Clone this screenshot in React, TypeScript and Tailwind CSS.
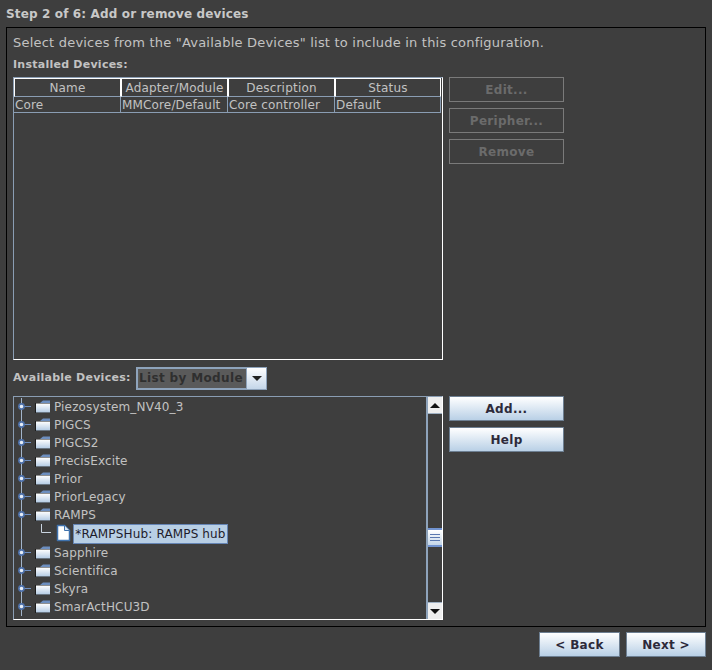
import type { ReactNode } from "react";

const FONT = "font-['DejaVu_Sans',sans-serif]";

const columns = [
  { name: "Name", width: "w-[107px]", value: "Core" },
  { name: "Adapter/Module", width: "w-[107px]", value: "MMCore/Default" },
  { name: "Description", width: "w-[107px]", value: "Core controller" },
  { name: "Status", width: "w-[106px]", value: "Default" },
];

const beforeHub = [
  "Piezosystem_NV40_3",
  "PIGCS",
  "PIGCS2",
  "PrecisExcite",
  "Prior",
  "PriorLegacy",
  "RAMPS",
];
const afterHub = ["Sapphire", "Scientifica", "Skyra", "SmarActHCU3D"];

function DisabledButton({ children }: { children: ReactNode }) {
  return (
    <div className="w-[115px] h-[25px] border border-[#7a7a7a] flex items-center justify-center font-bold text-[12px] tracking-[0.3px] text-[#6b6b6b]">
      {children}
    </div>
  );
}

function BlueButton({ children, w = "w-[115px]" }: { children: ReactNode; w?: string }) {
  return (
    <div
      className={`${w} h-[25px] border border-[#6d7f92] bg-gradient-to-b from-[#ffffff] to-[#b9d0e6] flex items-center justify-center font-bold text-[12px] tracking-[0.3px] text-[#2d2a3a]`}
    >
      {children}
    </div>
  );
}

function FolderRow({ name }: { name: string }) {
  return (
    <div className="h-[18px] flex items-center">
      <svg width="40" height="18" viewBox="0 0 40 18" className="shrink-0">
        <defs>
          <linearGradient id="folder" x1="0" y1="0" x2="0" y2="1">
            <stop offset="0" stopColor="#ffffff" />
            <stop offset="1" stopColor="#b4cbe4" />
          </linearGradient>
        </defs>
        <line x1="7.5" y1="0" x2="7.5" y2="18" stroke="#a3b5ca" />
        <line x1="10" y1="8.5" x2="17" y2="8.5" stroke="#6f8fc0" />
        <circle cx="7.5" cy="8.5" r="2.6" fill="#e8eef6" stroke="#4f73ad" strokeWidth="1.6" />
        <path d="M26 5 L29 2.5 H36 V5 Z" fill="#6c8ebf" />
        <rect x="21" y="5" width="15" height="10" fill="#1c1c1c" />
        <rect x="22" y="5.5" width="14" height="9" fill="url(#folder)" />
      </svg>
      <span className="text-[12px] tracking-[0.15px] text-[#c2c2c2]">{name}</span>
    </div>
  );
}

function HubRow() {
  return (
    <div className="h-[20px] flex items-center">
      <svg width="59" height="20" viewBox="0 0 59 20" className="shrink-0">
        <line x1="7.5" y1="0" x2="7.5" y2="20" stroke="#a3b5ca" />
        <path d="M27.5 0 V8.5 H37" fill="none" stroke="#c9d4e0" />
        <path d="M43.5 1.5 H50.5 L55.5 6.5 V16.5 H43.5 Z" fill="#ffffff" stroke="#3f72ad" strokeWidth="1.5" strokeLinejoin="round" />
        <path d="M50.5 1.5 V6.5 H55.5" fill="#dbe6f2" stroke="#3f72ad" />
      </svg>
      <span className="h-[20px] w-[155px] bg-[#b8cfe5] border border-[#6585b5] flex items-center justify-center text-[12px] tracking-[0.15px] text-[#1e1b2b]">
        *RAMPSHub: RAMPS hub
      </span>
    </div>
  );
}

export default function App() {
  return (
    <div className={`${FONT} w-[712px] h-[670px] bg-[#3e3e3e] overflow-hidden px-[6px] flex flex-col`}>
      <h1 className="h-[27px] flex items-center pt-[1px] font-bold text-[12px] tracking-[0.14px] text-[#c8c8c8]">
        Step 2 of 6: Add or remove devices
      </h1>

      <div className="w-[700px] h-[600px] border border-black px-[6px] flex flex-col">
        <p className="h-[23px] pt-[6px] text-[13px] leading-[17px] tracking-[0.21px] text-[#c2c2c2] whitespace-nowrap">
          Select devices from the "Available Devices" list to include in this configuration.
        </p>
        <p className="h-[26px] pt-[6px] font-bold text-[11px] leading-[16px] tracking-[0.25px] text-[#c2c2c2]">
          Installed Devices:
        </p>

        <div className="flex gap-[6px]">
          <div className="w-[430px] h-[283px] border border-[#8a9db3] border-r-white border-b-white">
            <div className="flex h-[19px]">
              {columns.map((c) => (
                <div
                  key={c.name}
                  className={`${c.width} border border-white border-b-[#8a9db3] flex items-center justify-center text-[12px] tracking-[0.2px] text-[#c2c2c2]`}
                >
                  {c.name}
                </div>
              ))}
            </div>
            <div className="flex w-[427px] h-[16px] border-b border-[#8a9db3]">
              {columns.map((c) => (
                <div
                  key={c.name}
                  className={`${c.width} border-r border-[#8a9db3] flex items-center pl-[1px] text-[12px] tracking-[0.15px] text-[#c2c2c2]`}
                >
                  {c.value}
                </div>
              ))}
            </div>
          </div>
          <div className="flex flex-col gap-[6px]">
            <DisabledButton>Edit...</DisabledButton>
            <DisabledButton>Peripher...</DisabledButton>
            <DisabledButton>Remove</DisabledButton>
          </div>
        </div>

        <div className="h-[36px] flex items-center">
          <span className="font-bold text-[11px] tracking-[0.25px] text-[#c2c2c2] w-[123px] whitespace-nowrap">
            Available Devices:
          </span>
          <div className="w-[131px] h-[23px] flex border border-[#8ea3bb]">
            <div className="w-[110px] border border-[#8ea3bb] bg-[#5a5a5a] flex items-center pl-[1px] font-bold text-[12px] tracking-[0.35px] text-[#2f2f2f]">
              List by Module
            </div>
            <div className="flex-1 bg-gradient-to-b from-white to-[#c4d6e9] flex items-center justify-center">
              <div className="w-0 h-0 border-x-[5px] border-x-transparent border-t-[5px] border-t-[#222222]" />
            </div>
          </div>
        </div>

        <div className="flex gap-[6px]">
          <div className="w-[430px] h-[224px] border border-[#8a9db3] border-r-white border-b-white flex">
            <div className="flex-1 pt-[1px] overflow-hidden">
              {beforeHub.map((n) => (
                <FolderRow key={n} name={n} />
              ))}
              <HubRow />
              {afterHub.map((n) => (
                <FolderRow key={n} name={n} />
              ))}
            </div>
            <div className="w-[16px] border-l-2 border-[#8ea3bb] flex flex-col">
              <div className="h-[17px] bg-[#eeeeee] border-b border-[#9fb0c2] flex items-center justify-center">
                <div className="w-0 h-0 border-x-[5px] border-x-transparent border-b-[5px] border-b-[#111111]" />
              </div>
              <div className="h-[19px] mt-[114px] border-y-2 border-[#7193d0] bg-gradient-to-b from-white to-[#c4d6e9] flex flex-col items-center justify-center gap-[2px]">
                <div className="w-[10px] h-px bg-[#5a78b0]" />
                <div className="w-[10px] h-px bg-[#5a78b0]" />
                <div className="w-[10px] h-px bg-[#5a78b0]" />
              </div>
              <div className="mt-auto h-[17px] bg-[#eeeeee] border-t border-[#9fb0c2] flex items-center justify-center">
                <div className="w-0 h-0 border-x-[5px] border-x-transparent border-t-[5px] border-t-[#111111]" />
              </div>
            </div>
          </div>
          <div className="flex flex-col gap-[6px]">
            <BlueButton>Add...</BlueButton>
            <BlueButton>Help</BlueButton>
          </div>
        </div>
      </div>

      <div className="flex justify-end gap-[6px] pt-[5px]">
        <BlueButton w="w-[81px]">&lt; Back</BlueButton>
        <BlueButton w="w-[80px]">Next &gt;</BlueButton>
      </div>
    </div>
  );
}
